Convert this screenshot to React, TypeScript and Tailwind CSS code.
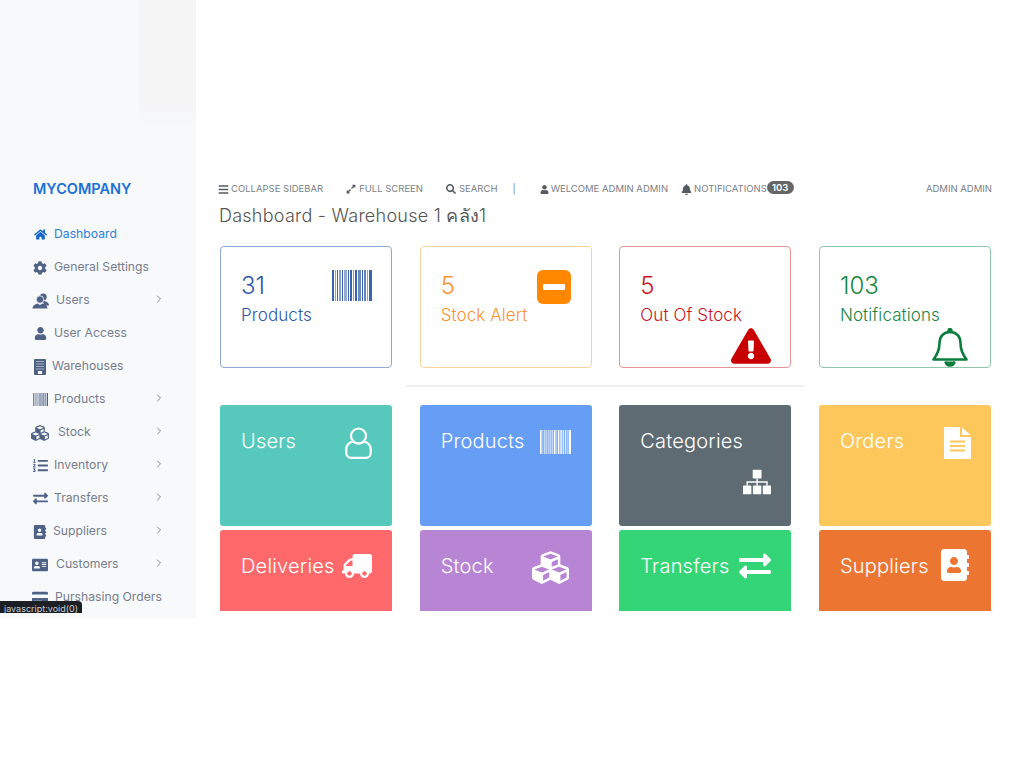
import React from "react";
import { ChevronRight } from "lucide-react";
import {
  FaAddressBook,
  FaAddressCard,
  FaBars,
  FaBell,
  FaCog,
  FaCreditCard,
  FaCubes,
  FaExchangeAlt,
  FaExclamationTriangle,
  FaExpandAlt,
  FaHome,
  FaListOl,
  FaSearch,
  FaTruck,
  FaUser,
} from "react-icons/fa";

const BARS = [
  [0, 2, 1], [3, 1, 0.6], [5, 1, 1], [7, 2, 0.6], [10, 1, 1], [12, 3, 0.55], [16, 1, 1],
  [18, 2, 1], [21, 1, 0.6], [23, 2, 1], [26, 3, 0.75], [30, 1, 1], [32, 2, 0.8], [35, 1, 0.6], [37, 3, 1],
];

const Barcode = ({ className }: { className: string }) => (
  <svg viewBox="0 0 40 31" preserveAspectRatio="none" className={className} fill="currentColor">
    {BARS.map(([x, w, o]) => (
      <rect key={x} x={x} y={0} width={w} height={31} opacity={o} />
    ))}
  </svg>
);

const MinusBox = () => (
  <svg viewBox="0 0 34 34" className="w-[34px] h-[34px]">
    <rect width="34" height="34" rx="6" fill="#ff8800" />
    <rect x="6" y="14" width="22" height="6" rx="1" fill="#fff" />
  </svg>
);

const BellOutline = () => (
  <svg viewBox="0 0 36 39" className="w-[36px] h-[39px]" fill="none" stroke="#0a7d3c" strokeWidth="2.6" strokeLinejoin="round">
    <circle cx="18" cy="2.600" r="1.400" fill="#0a7d3c" />
    <path d="M18 4c-6.500 0-10.500 4.500-10.500 11 0 8-2.500 12-6 16.500h33c-3.500-4.500-6-8.500-6-16.500C28.500 8.500 24.500 4 18 4z" />
    <path d="M13.500 33.500c0.500 2.800 2.300 4 4.500 4s4-1.200 4.500-4" fill="#0a7d3c" />
  </svg>
);

const UserOutline = () => (
  <svg viewBox="0 0 27 32" className="w-[27px] h-[32px]" fill="none" stroke="#fff" strokeWidth="2.200">
    <circle cx="13.500" cy="9" r="7.500" />
    <path d="M8 14.500C4 15.500 1.200 18.500 1.200 23v2.500c0 3 2 5.300 5 5.300h14.600c3 0 5-2.300 5-5.300V23c0-4.500-2.800-7.500-6.800-8.500-1.500 1.300-3.400 2-5.500 2s-4-.7-5.500-2z" />
  </svg>
);

const UsersIcon = () => (
  <svg viewBox="0 0 17 16" className="w-[17px] h-[16px] shrink-0" fill="#4f6286">
    <circle cx="11.200" cy="4" r="3.500" />
    <path d="M11 8c3 0 6 1.500 6 4.500h-5z" />
    <circle cx="8" cy="6.500" r="3.700" stroke="#f8f9fb" strokeWidth="0.800" />
    <path d="M0.500 15.500c0-2.800 2.500-4.300 5-5l2.500 1.500 2.500-1.500c2.500.7 5 2.200 5 5z" />
  </svg>
);

const WarehouseIcon = () => (
  <svg viewBox="0 0 12 16" className="w-[12px] h-[16px] shrink-0">
    <rect width="12" height="16" rx="1" fill="#4f6286" />
    <path d="M2 2.500h8M2 5h8M2 7.500h8M2 10h8" stroke="#b9c2d2" strokeWidth="0.800" />
    <rect x="4" y="12" width="4" height="3" fill="#f8f9fb" />
  </svg>
);

const SitemapIcon = () => (
  <svg viewBox="0 0 32 28" className="w-[32px] h-[28px] mt-[63px]" fill="#fff">
    <rect x="11" y="0" width="10" height="10" rx="1" />
    <rect x="0" y="18" width="9.500" height="10" rx="1" />
    <rect x="11.250" y="18" width="9.500" height="10" rx="1" />
    <rect x="22.500" y="18" width="9.500" height="10" rx="1" />
    <path d="M16 10v8M4.750 18v-4h22.500v4" fill="none" stroke="#fff" strokeWidth="1.600" />
  </svg>
);

const FileIcon = () => (
  <svg viewBox="0 0 27 32" className="w-[27px] h-[32px] mt-[22px]">
    <path d="M1 0h15v10h11v21a1 1 0 0 1-1 1H1a1 1 0 0 1-1-1V1a1 1 0 0 1 1-1z" fill="#fff" />
    <path d="M18 0.500 26.500 8H18z" fill="#fff" />
    <path d="M6 14.500h15M6 19h15M6 23.500h15" stroke="#fec75c" strokeWidth="2" />
  </svg>
);

type NavItem = { label: string; icon: React.ReactNode; gap: string; more?: boolean };

const iconCls = "text-[#4f6286] shrink-0";

const navItems: NavItem[] = [
  { label: "General Settings", icon: <FaCog size={14} className={iconCls} />, gap: "ml-[6px]" },
  { label: "Users", icon: <UsersIcon />, gap: "ml-[8px]", more: true },
  { label: "User Access", icon: <FaUser size={13} className={iconCls} />, gap: "ml-[6px]" },
  { label: "Warehouses", icon: <WarehouseIcon />, gap: "ml-[4px]" },
  { label: "Products", icon: <Barcode className="w-[15px] h-[13px] text-[#4f6286] shrink-0" />, gap: "ml-[6px]", more: true },
  { label: "Stock", icon: <FaCubes size={18} className={iconCls} />, gap: "ml-[10px]", more: true },
  { label: "Inventory", icon: <FaListOl size={15} className={iconCls} />, gap: "ml-[6px]", more: true },
  { label: "Transfers", icon: <FaExchangeAlt size={15} className={iconCls} />, gap: "ml-[6px]", more: true },
  { label: "Suppliers", icon: <FaAddressBook size={14} className={iconCls} />, gap: "ml-[5px]", more: true },
  { label: "Customers", icon: <FaAddressCard size={16} className={iconCls} />, gap: "ml-[8px]", more: true },
  { label: "Purshasing Orders", icon: <FaCreditCard size={16} className={iconCls} />, gap: "ml-[7px]" },
];

const stats = [
  { value: "31", label: "Products", cls: "border-[#8ea8d1] text-[#2f5aa6] pr-[19px]", icon: <Barcode className="w-[40px] h-[31px] text-[#3a63ab] mt-[23px] shrink-0" /> },
  { value: "5", label: "Stock Alert", cls: "border-[#f7d29b] text-[#fb9230] pr-[20px]", icon: <div className="mt-[23px] shrink-0"><MinusBox /></div> },
  { value: "5", label: "Out Of Stock", cls: "border-[#e39595] text-[#c8161d] pr-[19px]", icon: <FaExclamationTriangle size={40} className="text-[#c90000] self-end mb-[1px] shrink-0" /> },
  { value: "103", label: "Notifications", cls: "border-[#8fc7a8] text-[#17873f] pr-[22px]", icon: <div className="self-end shrink-0"><BellOutline /></div> },
];

const tiles = [
  { label: "Users", cls: "bg-[#56c9bc]", icon: <div className="mt-[22px]"><UserOutline /></div> },
  { label: "Products", cls: "bg-[#669df5]", icon: <Barcode className="w-[31px] h-[24px] text-white mt-[25px] mr-[1px]" /> },
  { label: "Categories", cls: "bg-[#5f6b72]", icon: <SitemapIcon /> },
  { label: "Orders", cls: "bg-[#fec75c]", icon: <FileIcon /> },
  { label: "Deliveries", cls: "bg-[#ff696b]", icon: <FaTruck size={30} className="text-white mt-[21px] -scale-x-100" /> },
  { label: "Stock", cls: "bg-[#b885d5]", icon: <FaCubes size={37} className="text-white mt-[19px] mr-[3px]" /> },
  { label: "Transfers", cls: "bg-[#34d576]", icon: <FaExchangeAlt size={32} className="text-white mt-[20px]" /> },
  { label: "Suppliers", cls: "bg-[#ed7532]", icon: <FaAddressBook size={32} className="text-white mt-[19px]" /> },
];

export default function App() {
  return (
    <div className="flex w-full h-[768px] bg-white overflow-hidden font-['Inter','Noto_Sans',sans-serif]">
      <aside className="relative w-[196px] h-[618px] shrink-0 overflow-hidden bg-[#f8f9fb]">
        <div className="flex justify-end h-[130px]">
          <div className="w-[57px] bg-linear-to-b from-[#f5f5f6] from-80% to-[#f8f9fb]" />
        </div>
        <div className="pt-[50px] pl-[33px] text-[14.500px] font-semibold leading-[17px] text-[#1b72d4]">MYCOMPANY</div>
        <nav className="pt-[21px] pl-[32px] pr-[31px] text-[12.200px] text-[#767d8d]">
          <div className="flex items-center h-[33px] text-[#2b7ed8]">
            <span className="w-[16px] flex justify-center">
              <FaHome size={13} className="text-[#1565c8]" />
            </span>
            <span className="ml-[6px]">Dashboard</span>
          </div>
          {navItems.map((item) => (
            <div key={item.label} className="flex items-center h-[33px] whitespace-nowrap">
              <span className="w-[16px] flex justify-center">{item.icon}</span>
              <span className={item.gap}>{item.label}</span>
              {item.more && <ChevronRight size={12} strokeWidth={1.500} className="ml-auto mb-[3px] text-[#5b6472]" />}
            </div>
          ))}
        </nav>
        <div className="absolute left-0 bottom-[5px] w-[82px] h-[12px] overflow-hidden rounded-tr-sm bg-[#1c1f24] pl-[4px] text-[9px] leading-[15px] text-[#c9ccd1]">
          javascript:void(0)
        </div>
      </aside>

      <main className="flex-1 pl-[24px] pr-[33px] pt-[182px]">
        <div className="flex items-center h-[14px] -ml-[2px] -mr-[1px] text-[9.500px] text-[#7b8086] whitespace-nowrap">
          <FaBars size={11} className="text-[#555b62]" />
          <span className="ml-[2px]">COLLAPSE SIDEBAR</span>
          <FaExpandAlt size={10} className="ml-[23px] text-[#555b62]" />
          <span className="ml-[3px]">FULL SCREEN</span>
          <FaSearch size={10} className="ml-[23px] text-[#555b62]" />
          <span className="ml-[3px]">SEARCH</span>
          <span className="ml-[15px]">|</span>
          <FaUser size={9} className="ml-[24px] text-[#555b62]" />
          <span className="ml-[2px]">WELCOME ADMIN ADMIN</span>
          <FaBell size={11} className="ml-[13px] text-[#555b62]" />
          <span className="ml-[2px]">NOTIFICATIONS</span>
          <span className="mb-[3px] w-[27px] h-[13px] rounded-full bg-[#666] text-center text-[9.500px] font-semibold leading-[13px] text-white">103</span>
          <span className="ml-auto">ADMIN ADMIN</span>
        </div>
        <h1 className="-mx-[1px] mt-[8px] text-[18px] font-light tracking-[0.250px] leading-[24px] text-[#555]">Dashboard - Warehouse 1 คลัง1</h1>

        <div className="grid grid-cols-4 gap-x-[27.600px] mt-[18px]">
          {stats.map((s) => (
            <div key={s.label} className={`flex justify-between h-[122px] rounded-[4px] border pl-[20px] ${s.cls}`}>
              <div className="w-[80px] whitespace-nowrap">
                <div className="mt-[23px] text-[24px] font-light leading-[32px]">{s.value}</div>
                <div className="mt-[2px] text-[17px] font-light tracking-[0.100px] leading-[22px]">{s.label}</div>
              </div>
              {s.icon}
            </div>
          ))}
        </div>

        <div className="mx-auto mt-[17px] w-[399px] h-[2px] bg-[#efefef]" />

        <div className="mt-[18px] h-[206px] overflow-hidden grid grid-cols-4 gap-x-[27.600px] gap-y-[4px] auto-rows-[121px]">
          {tiles.map((t) => (
            <div key={t.label} className={`flex justify-between rounded-[3px] pl-[21px] pr-[20px] ${t.cls}`}>
              <div className="mt-[22px] text-[20px] font-light tracking-[0.200px] leading-[28px] text-white whitespace-nowrap">{t.label}</div>
              {t.icon}
            </div>
          ))}
        </div>
      </main>
    </div>
  );
}
